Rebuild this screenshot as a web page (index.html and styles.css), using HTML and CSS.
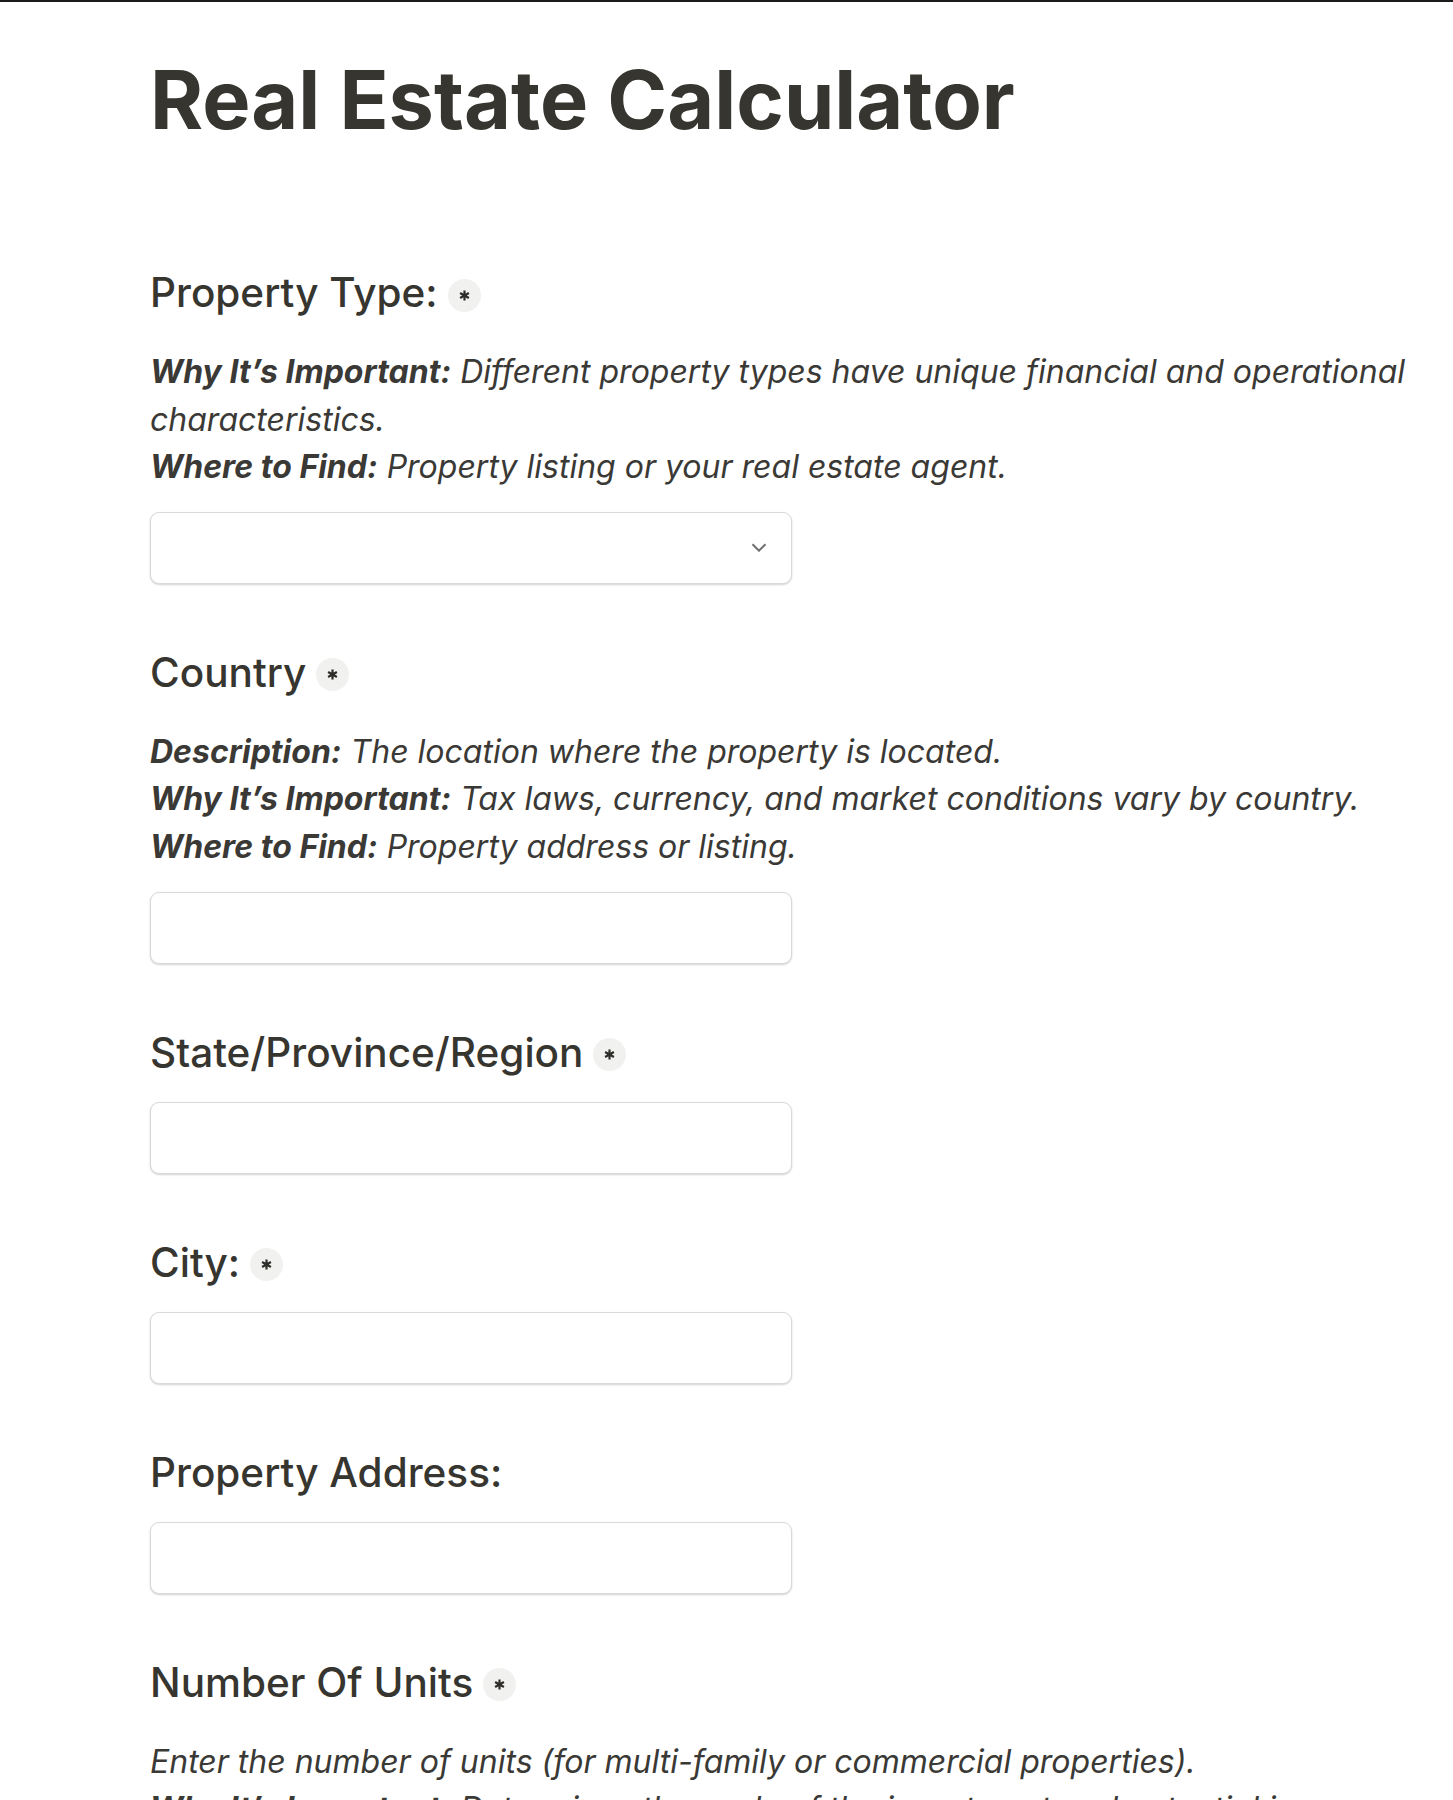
FILE: index.html
```html
<!DOCTYPE html>
<html lang="en">
<head>
  <meta charset="UTF-8" />
  <meta name="viewport" content="width=device-width, initial-scale=1.0"/>
  <title>Real Estate Calculator</title>
  <link rel="stylesheet" href="styles.css">
</head>
<body>
  <main class="page">
    <h1 class="title">Real Estate Calculator</h1>

    <div class="field">
      <label class="label" for="property-type">Property Type: <span class="req"><svg viewBox="0 0 12 12" width="11" height="11"><path d="M6 0.5V11.5M1.2 3.25L10.8 8.75M10.8 3.25L1.2 8.75"/></svg></span></label>
      <p class="desc">
        <b>Why It’s Important:</b> Different property types have unique financial and operational characteristics.<br>
        <b>Where to Find:</b> Property listing or your real estate agent.
      </p>
      <div class="select-wrap">
        <select id="property-type" class="control">
          <option></option>
          <option>Single-Family</option>
          <option>Multi-Family</option>
          <option>Commercial</option>
        </select>
        <svg class="chevron" viewBox="0 0 16 9" width="16" height="9"><path d="M1.5 1.2L8 7.7L14.5 1.2"/></svg>
      </div>
    </div>

    <div class="field">
      <label class="label" for="country">Country <span class="req"><svg viewBox="0 0 12 12" width="11" height="11"><path d="M6 0.5V11.5M1.2 3.25L10.8 8.75M10.8 3.25L1.2 8.75"/></svg></span></label>
      <p class="desc">
        <b>Description:</b> The location where the property is located.<br>
        <b>Why It’s Important:</b> Tax laws, currency, and market conditions vary by country.<br>
        <b>Where to Find:</b> Property address or listing.
      </p>
      <input type="text" id="country" class="control" />
    </div>

    <div class="field">
      <label class="label" for="state">State/Province/Region <span class="req"><svg viewBox="0 0 12 12" width="11" height="11"><path d="M6 0.5V11.5M1.2 3.25L10.8 8.75M10.8 3.25L1.2 8.75"/></svg></span></label>
      <input type="text" id="state" class="control" />
    </div>

    <div class="field">
      <label class="label" for="city">City: <span class="req"><svg viewBox="0 0 12 12" width="11" height="11"><path d="M6 0.5V11.5M1.2 3.25L10.8 8.75M10.8 3.25L1.2 8.75"/></svg></span></label>
      <input type="text" id="city" class="control" />
    </div>

    <div class="field">
      <label class="label" for="address">Property Address:</label>
      <input type="text" id="address" class="control" />
    </div>

    <div class="field">
      <label class="label" for="units">Number Of Units <span class="req"><svg viewBox="0 0 12 12" width="11" height="11"><path d="M6 0.5V11.5M1.2 3.25L10.8 8.75M10.8 3.25L1.2 8.75"/></svg></span></label>
      <p class="desc">
        Enter the number of units (for multi-family or commercial properties).<br>
        <b>Why It’s Important:</b> Determines the scale of the investment and potential income.
      </p>
      <input type="number" id="units" class="control" />
    </div>
  </main>
</body>
</html>
```

FILE: styles.css
```css
body {
  margin: 0;
  font-family: Inter, "Noto Sans", sans-serif;
  color: #37352f;
  background: #fff;
  border-top: 2px solid #1b1b1b;
}

.page {
  padding: 0 20px 40px 150px;
}

.title {
  margin: 50px 0 118px;
  font-size: 81px;
  line-height: 97px;
  font-weight: 700;
}

.field {
  margin-bottom: 63px;
}

.label {
  display: flex;
  align-items: center;
  gap: 10px;
  font-size: 40.5px;
  line-height: 52px;
  font-weight: 500;
}

.req {
  display: inline-flex;
  align-items: center;
  justify-content: center;
  width: 33px;
  height: 33px;
  margin-top: 4px;
  border-radius: 50%;
  background: #f1f1ef;
}

.req path {
  stroke: #2e2d2a;
  stroke-width: 2.4;
  fill: none;
}

.desc {
  margin: 29px 0 0;
  font-size: 32px;
  line-height: 47.6px;
  font-style: italic;
  color: #3a3935;
}

.desc b {
  font-weight: 700;
}

.control {
  display: block;
  box-sizing: border-box;
  width: 642px;
  height: 72px;
  margin-top: 23px;
  padding: 0 20px;
  font-family: inherit;
  font-size: 28px;
  color: #37352f;
  background: #fff;
  border: 1px solid #d9d9d7;
  border-radius: 9px;
  box-shadow: 0 1px 2px rgba(0, 0, 0, 0.18);
  outline: none;
  appearance: none;
  -webkit-appearance: none;
}

.desc + .control,
.desc + .select-wrap .control {
  margin-top: 21px;
}

.select-wrap {
  position: relative;
  width: 642px;
}

.chevron {
  position: absolute;
  right: 25px;
  top: 31px;
}

.chevron path {
  fill: none;
  stroke: #6f6f6d;
  stroke-width: 2;
}
```
